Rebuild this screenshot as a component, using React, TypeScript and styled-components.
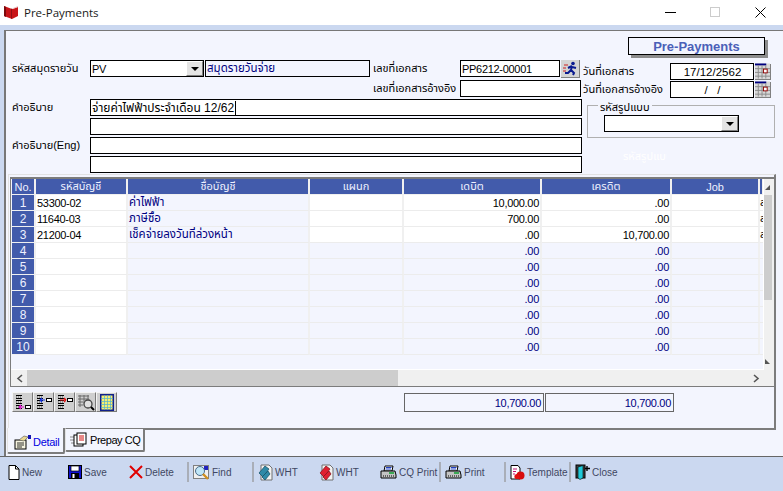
import React from 'react';
import styled, { createGlobalStyle } from 'styled-components';

const GlobalStyle = createGlobalStyle`
	html, body {
		margin: 0;
		padding: 0;
		background: #f3f5fe;
		overflow: hidden;
	}
	* {
		box-sizing: border-box;
	}
`;

const Window = styled.div`
	width: 783px;
	height: 491px;
	display: flex;
	flex-direction: column;
	font-family: 'Liberation Sans', 'Noto Sans Thai', 'Noto Sans', sans-serif;
	font-size: 11px;
	letter-spacing: -0.3px;
	color: #000;
`;

const TitleBar = styled.div`
	height: 25px;
	flex: none;
	background: #fff;
	display: flex;
	align-items: center;
	padding-left: 3px;
`;

const TitleText = styled.span`
	font-family: 'Open Sans', sans-serif;
	font-size: 11.5px;
	letter-spacing: 0;
	color: #1a1a1a;
	margin-left: 5px;
	flex: 1;
`;

const WinButton = styled.div`
	width: 45px;
	height: 25px;
	display: flex;
	align-items: center;
	justify-content: center;
`;

const Body = styled.div`
	flex: 1;
	min-height: 0;
	background: #cbd8f0;
	padding: 5px 0 0 4px;
	display: flex;
`;

const Panel = styled.div`
	flex: 1;
	background: #f3f5fe;
	border-top: 1px solid #777;
	border-left: 2px solid #777;
	display: flex;
	flex-direction: column;
`;

const TitleRow = styled.div`
	height: 29px;
	flex: none;
	display: flex;
	justify-content: flex-end;
	padding: 6px 18px 0 0;
`;

const FormTitle = styled.div`
	width: 137px;
	height: 18px;
	border: 1px solid #000;
	box-shadow: 3px 3px 0 #8c8c8c;
	display: flex;
	align-items: center;
	justify-content: center;
	font-size: 13px;
	font-weight: bold;
	letter-spacing: 0;
	color: #4a60b8;
`;

const TopFields = styled.div`
	height: 39px;
	display: flex;
	flex: none;
`;

const DocFields = styled.div`
	width: 577px;
	display: flex;
	flex-direction: column;
	gap: 3px;
`;

const DateFields = styled.div`
	display: flex;
	flex-direction: column;
	gap: 1px;
	padding-top: 3px;
`;

const Row = styled.div<{ $indent?: number }>`
	height: 17px;
	display: flex;
	align-items: center;
	padding-left: ${p => p.$indent ?? 0}px;
`;

const Label = styled.span<{ $w: number }>`
	width: ${p => p.$w}px;
	flex: none;
	white-space: nowrap;
	letter-spacing: 0;
`;

const Box = styled.div<{ $w: number; $read?: boolean; $navy?: boolean; $center?: boolean }>`
	width: ${p => p.$w}px;
	height: 17px;
	flex: none;
	border: 1px solid #000;
	background: ${p => (p.$read ? '#f3f5fe' : '#fff')};
	color: ${p => (p.$navy ? '#000080' : '#000')};
	display: flex;
	align-items: center;
	justify-content: ${p => (p.$center ? 'center' : 'flex-start')};
	padding-left: 1px;
	white-space: pre;
	overflow: hidden;
	position: relative;
`;

const ThaiText = styled.span<{ $size: number }>`
	font-size: ${p => p.$size}px;
	letter-spacing: 0;
`;

const DateText = styled.span`
	font-size: 11.5px;
	letter-spacing: 0;
`;

const Caret = styled.span`
	width: 1px;
	height: 14px;
	background: #000;
	margin-left: 1px;
`;

const DropButton = styled.div`
	margin-left: auto;
	width: 17px;
	height: 15px;
	flex: none;
	background: #e4e4e4;
	border-right: 1px solid #808080;
	border-bottom: 1px solid #808080;
	border-top: 1px solid #fff;
	border-left: 1px solid #fff;
	display: flex;
	align-items: center;
	justify-content: center;
`;

const Arrow = styled.span`
	width: 0;
	height: 0;
	border-left: 4px solid transparent;
	border-right: 4px solid transparent;
	border-top: 4px solid #000;
`;

const IconButton = styled.div<{ $w: number; $h: number; $ml: number }>`
	width: ${p => p.$w}px;
	height: ${p => p.$h}px;
	margin-left: ${p => p.$ml}px;
	flex: none;
	background: #d4d4d4;
	border-right: 1px solid #808080;
	border-bottom: 1px solid #808080;
	display: flex;
	align-items: center;
	justify-content: center;
`;

const DescArea = styled.div`
	display: flex;
	flex: none;
`;

const DescRows = styled.div`
	width: 581px;
	display: flex;
	flex-direction: column;
	gap: 2px;
`;

const SideArea = styled.div`
	width: 188px;
	padding-top: 6px;
`;

const GroupBox = styled.div`
	height: 33px;
	border: 1px solid #b0b0b0;
	position: relative;
	padding: 9px 0 0 16px;
`;

const GroupLegend = styled.span`
	position: absolute;
	top: -7px;
	left: 10px;
	padding: 0 2px;
	background: #f3f5fe;
	letter-spacing: 0;
`;

const GhostLabel = styled.div`
	color: #fff;
	letter-spacing: 0;
	padding: 10px 0 0 36px;
	width: 80px;
	white-space: nowrap;
	overflow: hidden;
`;

const TabPage = styled.div`
	height: 256px;
	width: 768px;
	margin: 1px 0 0 2px;
	flex: none;
	border-top: 1px solid #e2e2e2;
	border-left: 1px solid #e2e2e2;
	border-right: 2px solid #7c7c7c;
	border-bottom: 2px solid #7c7c7c;
	padding: 2px 0 0 1px;
`;

const GridFrame = styled.div`
	height: 210px;
	border-top: 2px solid #7c7c7c;
	border-left: 1px solid #7c7c7c;
	border-bottom: 1px solid #7c7c7c;
	display: flex;
	flex-direction: column;
`;

const GridTop = styled.div`
	flex: 1;
	min-height: 0;
	display: flex;
`;

const GridBody = styled.div`
	width: 753px;
	padding-left: 1px;
	background: #f3f5fe;
	border-right: 1px solid #fff;
	border-bottom: 1px solid #fff;
	overflow: hidden;
`;

const GridRow = styled.div`
	height: 16px;
	display: grid;
	grid-template-columns: 24px 92px 182px 94px 138px 130px 88px 4px;
`;

const HeadCell = styled.div`
	background: #425bab;
	color: #eef1ff;
	border-right: 2px solid #f0f0f0;
	border-bottom: 1px solid #f0f0f0;
	display: flex;
	align-items: center;
	justify-content: center;
	white-space: nowrap;
	overflow: hidden;
	font-size: 11px;
	letter-spacing: 0;
`;

const NumberCell = styled(HeadCell)`
	font-size: 12px;
`;

const Cell = styled.div<{ $tone: 'white' | 'soft'; $right?: boolean; $navy?: boolean }>`
	background: ${p => (p.$tone === 'white' ? '#fff' : '#f3f5fe')};
	color: ${p => (p.$navy ? '#000080' : '#000')};
	border-right: 2px solid #f0f0f0;
	border-bottom: 1px solid #ececec;
	display: flex;
	align-items: center;
	justify-content: ${p => (p.$right ? 'flex-end' : 'flex-start')};
	padding: 0 1px;
	white-space: nowrap;
	overflow: hidden;
	font-size: 11px;
`;

const ClippedCell = styled(Cell)`
	border-right: none;
	padding: 0;
`;

const VScroll = styled.div`
	flex: 1;
	background: #f0f0f0;
	display: flex;
	flex-direction: column;
	align-items: stretch;
	padding-right: 2px;
`;

const VArrow = styled.div`
	height: 16px;
	flex: none;
	display: flex;
	align-items: center;
	justify-content: center;
`;

const VThumb = styled.div`
	height: 105px;
	flex: none;
	background: #cdcdcd;
`;

const VTrack = styled.div`
	flex: 1;
`;

const HScroll = styled.div`
	height: 16px;
	flex: none;
	background: #f0f0f0;
	display: flex;
	align-items: center;
	padding-right: 10px;
`;

const HArrow = styled.div`
	width: 16px;
	height: 16px;
	flex: none;
	display: flex;
	align-items: center;
	justify-content: center;
`;

const HThumb = styled.div`
	width: 371px;
	height: 16px;
	flex: none;
	background: #cdcdcd;
`;

const HTrack = styled.div`
	flex: 1;
`;

const UnderGrid = styled.div`
	display: flex;
	align-items: flex-start;
	justify-content: space-between;
	padding: 5px 100px 0 2px;
`;

const ToolGroup = styled.div`
	display: flex;
	width: 105px;
`;

const ToolButton = styled.div`
	width: 21px;
	height: 20px;
	background: #cfcfcf;
	border-left: 1px solid #f4f4f4;
	border-top: 1px solid #f4f4f4;
	border-right: 1px solid #7a7a7a;
	border-bottom: 1px solid #7a7a7a;
	display: flex;
	align-items: center;
	justify-content: center;
`;

const Totals = styled.div`
	display: flex;
	gap: 1px;
	margin-top: 1px;
`;

const TotalBox = styled.div<{ $w: number }>`
	width: ${p => p.$w}px;
	height: 19px;
	border: 1px solid #666;
	color: #000080;
	display: flex;
	align-items: center;
	justify-content: flex-end;
	padding-right: 2px;
`;

const Tabs = styled.div`
	display: flex;
	flex: none;
	margin: -2px 0 0 1px;
	align-items: flex-start;
`;

const Tab = styled.div<{ $active?: boolean }>`
	height: ${p => (p.$active ? 26 : 24)}px;
	width: ${p => (p.$active ? 58 : 80)}px;
	background: #f3f5fe;
	border-left: 1px solid #e2e2e2;
	border-right: 2px solid #7c7c7c;
	border-bottom: 2px solid #7c7c7c;
	border-top: ${p => (p.$active ? 'none' : '1px solid #7c7c7c')};
	border-radius: 0 0 2px 2px;
	color: ${p => (p.$active ? '#0000e0' : '#000')};
	display: flex;
	align-items: center;
	gap: ${p => (p.$active ? 2 : 1)}px;
	padding: ${p => (p.$active ? '4px 0 0 6px' : '0 0 0 4px')};
	font-size: 11px;
	letter-spacing: ${p => (p.$active ? -0.3 : -0.45)}px;
	position: relative;
`;

const ToolBar = styled.div`
	height: 35px;
	flex: none;
	background: #cbd8f0;
	border-top: 1px solid #666;
	display: flex;
	align-items: center;
	padding: 0 0 4px 8px;
`;

const BarItem = styled.div<{ $w: number }>`
	width: ${p => p.$w}px;
	flex: none;
	display: flex;
	align-items: center;
	gap: 2px;
	color: #3f4762;
	font-size: 10px;
	letter-spacing: 0;
	white-space: nowrap;
`;

const BarSep = styled.div`
	width: 2px;
	height: 20px;
	flex: none;
	background: #a9aeb8;
	margin-right: 4px;
`;

const BookIcon = () => (
	<svg width="16" height="15" viewBox="0 0 16 15">
		<path d="M1 1 L9 4 L15 2 V11 L9 14 L1 11 Z" fill="#c81418" />
		<path d="M1 1 L3 2 V12 L1 11 Z" fill="#7a0a0c" />
		<path d="M9 4 V14 L8 13.6 V3.6 Z" fill="#8e0f14" />
		<path d="M10 3 L15 1 V2 L10 4 Z" fill="#e8c8c8" />
	</svg>
);

const RunnerIcon = () => (
	<svg width="15" height="15" viewBox="0 0 15 15">
		<circle cx="10" cy="2.5" r="1.8" fill="#0a1a90" />
		<path d="M9 5 L5 7 M9 5 L8 9 L11 12 L10 14 M8 9 L5 12 L2 12 M9 6 L13 7" stroke="#0a1a90" strokeWidth="2" fill="none" />
		<path d="M1 4 H5 M0 7 H3 M0 10 H3" stroke="#d02020" strokeWidth="1" />
	</svg>
);

const CalendarIcon = () => (
	<svg width="16" height="16" viewBox="0 0 16 16">
		<rect width="16" height="16" fill="#d8d8d8" />
		<rect y="0" width="12" height="2" fill="#000080" />
		<path d="M0 5.5 H16 M0 9.5 H16 M0 13.5 H16 M3.5 2 V16 M7.5 2 V16 M11.5 2 V16" stroke="#8a8a8a" />
		<rect x="9" y="6" width="4" height="4" fill="#fff" stroke="#900000" />
	</svg>
);

const RowBlock = ({ y }: { y: number }) => (
	<>
		<path d={`M2 ${y + 0.5} H8 M2 ${y + 3.5} H8`} stroke="#000" />
		<path d={`M2 ${y + 2} H8`} stroke="#555" strokeDasharray="1 1" />
	</>
);

const RowsGlyph = () => (
	<>
		<RowBlock y={2} />
		<RowBlock y={7} />
		<RowBlock y={12} />
	</>
);

const MoveIcon = ({ color, low }: { color: string; low?: boolean }) => {
	const y = low ? 14 : 7;
	return (
		<svg width="18" height="18" viewBox="0 0 18 18">
			<RowsGlyph />
			<rect x="11.5" y={y - 1.5} width="5" height="3" fill="#fff" stroke="#000" />
			<path d={`M5 ${y} H10 M5 ${y} L7 ${y - 2} M5 ${y} L7 ${y + 2}`} stroke={color} fill="none" strokeWidth="1.2" />
		</svg>
	);
};

const MoveRightIcon = () => (
	<svg width="18" height="18" viewBox="0 0 18 18">
		<RowsGlyph />
		<rect x="11.5" y="5.5" width="5" height="3" fill="#fff" stroke="#000" />
		<path d="M4 7 H10 M10 7 L8 5 M10 7 L8 9" stroke="#e01010" fill="none" strokeWidth="1.2" />
	</svg>
);

const GridSearchIcon = () => (
	<svg width="18" height="18" viewBox="0 0 18 18">
		<path d="M1 3 H12 M1 6 H12 M1 9 H7 M1 12 H6 M3 2 V14 M7 2 V8 M11 2 V6" stroke="#6a6a6a" />
		<circle cx="11" cy="11" r="4" fill="#e0e0e0" stroke="#444" strokeWidth="1.3" />
		<path d="M14 14 L17 17" stroke="#000" strokeWidth="2" />
	</svg>
);

const SheetIcon = () => (
	<svg width="14" height="17" viewBox="0 0 14 17">
		<rect x=".75" y=".75" width="12.5" height="15.5" fill="#f6ee70" stroke="#10208c" strokeWidth="1.5" />
		<path d="M1 4.5 H13 M1 7.5 H13 M1 10.5 H13 M1 13.5 H13 M4.5 1 V16 M7.5 1 V16 M10.5 1 V16" stroke="#55b0d0" strokeWidth=".7" />
	</svg>
);

const DetailIcon = () => (
	<svg width="17" height="15" viewBox="0 0 17 15">
		<rect x="1" y="5" width="11" height="9" fill="#f6f3e0" stroke="#000" />
		<path d="M3 8 H10 M3 10 H10 M3 12 H8" stroke="#000" strokeWidth=".8" />
		<path d="M5 5 L10 1 L14 2 L10 6 Z" fill="#e8d890" stroke="#666" strokeWidth=".7" />
		<rect x="14" y="0" width="3" height="4" fill="#1414b0" />
	</svg>
);

const PrepayIcon = () => (
	<svg width="19" height="15" viewBox="0 0 19 15">
		<path d="M0 5 H4 M0 8 H4 M1 11 H5" stroke="#888" />
		<rect x="4" y="3" width="9" height="11" fill="#fff" stroke="#000" />
		<rect x="7" y="1" width="9" height="11" fill="#fff" stroke="#000" />
		<path d="M9 4 H14 M9 6 H14 M9 8 H14" stroke="#d01010" />
	</svg>
);

const NewIcon = () => (
	<svg width="12" height="15" viewBox="0 0 12 15">
		<path d="M1 .5 H7.5 L11 4 V14.5 H1 Z" fill="#fff" stroke="#000" />
		<path d="M7.5 .5 V4 H11" fill="none" stroke="#000" />
	</svg>
);

const SaveIcon = () => (
	<svg width="14" height="14" viewBox="0 0 14 14">
		<rect x=".5" y=".5" width="13" height="13" fill="#1010d0" stroke="#000" />
		<rect x="3" y="1" width="8" height="5" fill="#fff" stroke="#000" strokeWidth=".7" />
		<rect x="3" y="8" width="8" height="5.5" fill="#000" />
		<rect x="4.5" y="9" width="2" height="4" fill="#fff" />
	</svg>
);

const DeleteIcon = () => (
	<svg width="14" height="14" viewBox="0 0 14 14">
		<path d="M1 1 L13 13 M13 1 L1 13" stroke="#e00000" strokeWidth="2" />
	</svg>
);

const FindIcon = () => (
	<svg width="17" height="15" viewBox="0 0 17 15">
		<rect x=".5" y=".5" width="15" height="13" fill="#f0f0f0" stroke="#808080" />
		<rect x="11" y="1" width="4" height="4" fill="#2020c0" />
		<circle cx="7" cy="6" r="4.5" fill="#bfe6f8" stroke="#4a6a8a" />
		<path d="M10 9 L15 14" stroke="#d09020" strokeWidth="2.4" />
	</svg>
);

const WhtIcon = ({ color, dark }: { color: string; dark: string }) => (
	<svg width="15" height="17" viewBox="0 0 15 17">
		<path d="M3 1 H11 L14 4 V16 H3 Z" fill="#f2f2f2" stroke="#707070" />
		<path d="M1 9 L7 2 L11 5 L5 13 Z" fill={color} stroke={dark} strokeWidth=".7" />
		<path d="M4 13 L10 7 L12 10 L7 16 Z" fill={color} stroke={dark} strokeWidth=".7" />
	</svg>
);

const PrinterIcon = () => (
	<svg width="17" height="14" viewBox="0 0 17 14">
		<path d="M5 1 H13 L12 6 H4 Z" fill="#fff" stroke="#000" />
		<path d="M6 2.5 H11.5 M5.5 4 H11" stroke="#2040c0" />
		<path d="M1 6 H15 L16 10 V13 H1 Z" fill="#c4c4c4" stroke="#000" />
		<path d="M9 8 H14" stroke="#10a030" strokeWidth="1.5" />
		<path d="M3 11 H14" stroke="#000" strokeDasharray="1 1" />
	</svg>
);

const TemplateIcon = () => (
	<svg width="15" height="15" viewBox="0 0 15 15">
		<path d="M1 .5 H8 L10 3 V14 H1 Z" fill="#fff" stroke="#000" />
		<path d="M3 4 H7 M3 6.5 H6 M3 9 H5" stroke="#c01070" />
		<circle cx="10.5" cy="10.5" r="4" fill="#d80c0c" />
		<circle cx="7" cy="11.5" r="2.6" fill="#e01010" />
	</svg>
);

const CloseIcon = () => (
	<svg width="15" height="16" viewBox="0 0 15 16">
		<rect x="1" y="1" width="9" height="13" fill="#404040" stroke="#000" />
		<path d="M3 3 L8 1.5 V14 L5 15.5 L3 14 Z" fill="#20c8d8" stroke="#000" strokeWidth=".6" />
		<path d="M12 2 V7 M10 4.5 H15" stroke="#000" strokeWidth="1.4" />
	</svg>
);

const HEADERS = ['No.', 'รหัสบัญชี', 'ชื่อบัญชี', 'แผนก', 'เดบิต', 'เครดิต', 'Job', ''];

const LINES = [
	{ no: 1, code: '53300-02', name: 'ค่าไฟฟ้า', debit: '10,000.00', credit: '.00' },
	{ no: 2, code: '11640-03', name: 'ภาษีซื้อ', debit: '700.00', credit: '.00' },
	{ no: 3, code: '21200-04', name: 'เช็คจ่ายลงวันที่ล่วงหน้า', debit: '.00', credit: '10,700.00' },
	{ no: 4, code: '', name: '', debit: '.00', credit: '.00' },
	{ no: 5, code: '', name: '', debit: '.00', credit: '.00' },
	{ no: 6, code: '', name: '', debit: '.00', credit: '.00' },
	{ no: 7, code: '', name: '', debit: '.00', credit: '.00' },
	{ no: 8, code: '', name: '', debit: '.00', credit: '.00' },
	{ no: 9, code: '', name: '', debit: '.00', credit: '.00' },
	{ no: 10, code: '', name: '', debit: '.00', credit: '.00' }
];

const App = () => (
	<>
		<GlobalStyle />
		<Window>
			<TitleBar>
				<BookIcon />
				<TitleText>Pre-Payments</TitleText>
				<WinButton>
					<svg width="11" height="11" viewBox="0 0 11 11"><path d="M0 5.5 H11" stroke="#000" /></svg>
				</WinButton>
				<WinButton>
					<svg width="11" height="11" viewBox="0 0 11 11"><rect x=".5" y=".5" width="9" height="9" fill="none" stroke="#ccc" /></svg>
				</WinButton>
				<WinButton>
					<svg width="11" height="11" viewBox="0 0 11 11"><path d="M.5 .5 L10.5 10.5 M10.5 .5 L.5 10.5" stroke="#000" /></svg>
				</WinButton>
			</TitleBar>
			<Body>
				<Panel>
					<TitleRow>
						<FormTitle>Pre-Payments</FormTitle>
					</TitleRow>
					<TopFields>
						<DocFields>
							<Row $indent={6}>
								<Label $w={78}>รหัสสมุดรายวัน</Label>
								<Box $w={114}>
									PV
									<DropButton><Arrow /></DropButton>
								</Box>
								<Box $w={165} $read $navy style={{ marginLeft: 1 }}>
									<ThaiText $size={11.5}>สมุดรายวันจ่าย</ThaiText>
								</Box>
								<Label $w={87} style={{ marginLeft: 3 }}>เลขที่เอกสาร</Label>
								<Box $w={100}>PP6212-00001</Box>
								<IconButton $w={19} $h={18} $ml={1}><RunnerIcon /></IconButton>
							</Row>
							<Row $indent={367}>
								<Label $w={87}>เลขที่เอกสารอ้างอิง</Label>
								<Box $w={121} />
							</Row>
						</DocFields>
						<DateFields>
							<Row>
								<Label $w={87}>วันที่เอกสาร</Label>
								<Box $w={84} $center><DateText>17/12/2562</DateText></Box>
								<IconButton $w={16} $h={16} $ml={1}><CalendarIcon /></IconButton>
							</Row>
							<Row>
								<Label $w={87}>วันที่เอกสารอ้างอิง</Label>
								<Box $w={84} $center><DateText>/   /</DateText></Box>
								<IconButton $w={16} $h={16} $ml={1}><CalendarIcon /></IconButton>
							</Row>
						</DateFields>
					</TopFields>
					<DescArea>
						<DescRows>
							<Row $indent={6}>
								<Label $w={78}>คำอธิบาย</Label>
								<Box $w={492}>
									<ThaiText $size={12}>จ่ายค่าไฟฟ้าประจำเดือน 12/62</ThaiText>
									<Caret />
								</Box>
							</Row>
							<Row $indent={84}>
								<Box $w={492} />
							</Row>
							<Row $indent={6}>
								<Label $w={78}>คำอธิบาย(Eng)</Label>
								<Box $w={492} />
							</Row>
							<Row $indent={84}>
								<Box $w={492} />
							</Row>
						</DescRows>
						<SideArea>
							<GroupBox>
								<GroupLegend>รหัสรูปแบบ</GroupLegend>
								<Box $w={135}>
									<DropButton><Arrow /></DropButton>
								</Box>
							</GroupBox>
							<GhostLabel>รหัสรูปแบบ</GhostLabel>
						</SideArea>
					</DescArea>
					<TabPage>
						<GridFrame>
							<GridTop>
								<GridBody>
									<GridRow>
										{HEADERS.map((h, i) => <HeadCell key={i}>{h}</HeadCell>)}
									</GridRow>
									{LINES.map(l => {
										const filled = l.no <= 3;
										const tone = filled ? 'white' : 'soft';
										return (
											<GridRow key={l.no}>
												<NumberCell>{l.no}</NumberCell>
												<Cell $tone="white">{l.code}</Cell>
												<Cell $tone="soft" $navy><ThaiText $size={11.5}>{l.name}</ThaiText></Cell>
												<Cell $tone={tone} />
												<Cell $tone={tone} $right $navy={!filled}>{l.debit}</Cell>
												<Cell $tone={tone} $right $navy={!filled}>{l.credit}</Cell>
												<Cell $tone={tone} />
												<ClippedCell $tone={tone}>{filled ? 'ส่' : ''}</ClippedCell>
											</GridRow>
										);
									})}
								</GridBody>
								<VScroll>
									<VArrow>
										<svg width="6" height="6" viewBox="0 0 6 6"><path d="M0 6 L5 1 V6 Z" fill="#555" /></svg>
									</VArrow>
									<VThumb />
									<VTrack />
									<VArrow>
										<svg width="6" height="6" viewBox="0 0 6 6"><path d="M0 0 L5 5 H0 Z" fill="#555" /></svg>
									</VArrow>
								</VScroll>
							</GridTop>
							<HScroll>
								<HArrow>
									<svg width="7" height="9" viewBox="0 0 7 9"><path d="M6 1 L2 4.5 L6 8" stroke="#555" strokeWidth="1.6" fill="none" /></svg>
								</HArrow>
								<HThumb />
								<HTrack />
								<HArrow>
									<svg width="7" height="9" viewBox="0 0 7 9"><path d="M1 1 L5 4.5 L1 8" stroke="#555" strokeWidth="1.6" fill="none" /></svg>
								</HArrow>
							</HScroll>
						</GridFrame>
						<UnderGrid>
							<ToolGroup>
								<ToolButton><MoveIcon color="#e010d0" low /></ToolButton>
								<ToolButton><MoveIcon color="#1030e0" /></ToolButton>
								<ToolButton><MoveRightIcon /></ToolButton>
								<ToolButton><GridSearchIcon /></ToolButton>
								<ToolButton><SheetIcon /></ToolButton>
							</ToolGroup>
							<Totals>
								<TotalBox $w={140}>10,700.00</TotalBox>
								<TotalBox $w={129}>10,700.00</TotalBox>
							</Totals>
						</UnderGrid>
					</TabPage>
					<Tabs>
						<Tab $active><DetailIcon />Detail</Tab>
						<Tab><PrepayIcon />Prepay CQ</Tab>
					</Tabs>
				</Panel>
			</Body>
			<ToolBar>
				<BarItem $w={60}><NewIcon />New</BarItem>
				<BarItem $w={61}><SaveIcon />Save</BarItem>
				<BarItem $w={58}><DeleteIcon />Delete</BarItem>
				<BarSep />
				<BarItem $w={59}><FindIcon />Find</BarItem>
				<BarSep />
				<BarItem $w={61}><WhtIcon color="#2f8aa8" dark="#104a60" />WHT</BarItem>
				<BarItem $w={61}><WhtIcon color="#e02030" dark="#801018" />WHT</BarItem>
				<BarItem $w={59}><PrinterIcon />CQ Print</BarItem>
				<BarSep />
				<BarItem $w={59}><PrinterIcon />Print</BarItem>
				<BarSep />
				<BarItem $w={59}><TemplateIcon />Template</BarItem>
				<BarSep />
				<BarItem $w={60}><CloseIcon />Close</BarItem>
			</ToolBar>
		</Window>
	</>
);

export default App;
